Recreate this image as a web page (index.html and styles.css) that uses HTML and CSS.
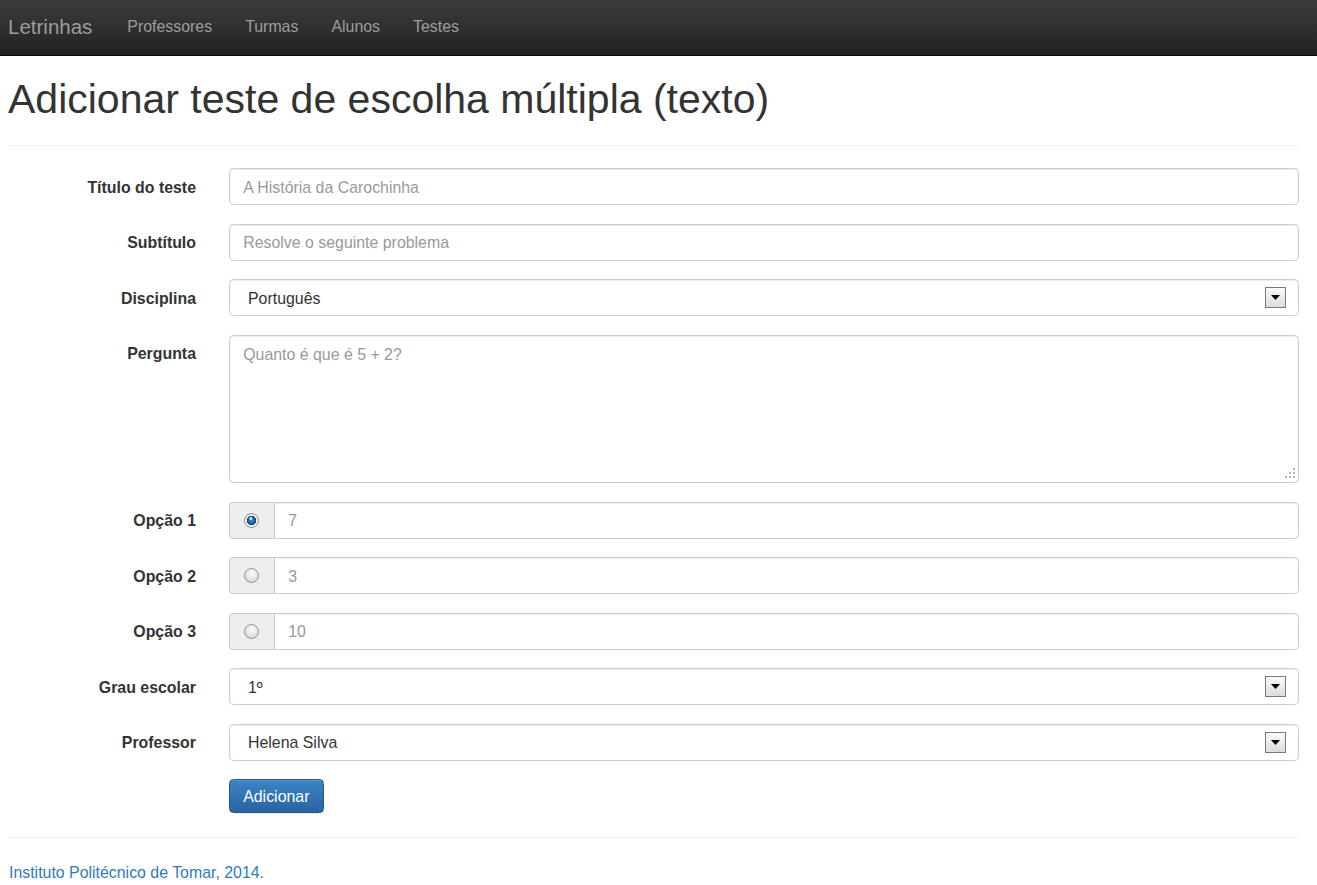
FILE: index.html
```html
<!DOCTYPE html>
<html lang="pt">
<head>
<meta charset="utf-8">
<title>Letrinhas</title>
<link rel="stylesheet" href="styles.css">
</head>
<body>
<nav class="navbar">
  <div class="nav-inner">
    <a class="brand">Letrinhas</a>
    <a class="nav-link">Professores</a>
    <a class="nav-link">Turmas</a>
    <a class="nav-link">Alunos</a>
    <a class="nav-link">Testes</a>
  </div>
</nav>
<main class="page">
  <div class="page-header">
    <h1>Adicionar teste de escolha múltipla (texto)</h1>
  </div>
  <form class="form">
    <label class="label">Título do teste</label>
    <div class="control"><span class="placeholder">A História da Carochinha</span></div>

    <label class="label">Subtítulo</label>
    <div class="control"><span class="placeholder">Resolve o seguinte problema</span></div>

    <label class="label">Disciplina</label>
    <div class="control select"><span class="value">Português</span><span class="arrow"><svg width="9" height="5" viewBox="0 0 9 5"><path d="M0 0h9L4.5 5z" fill="#000"/></svg></span></div>

    <label class="label">Pergunta</label>
    <div class="control textarea"><span class="placeholder">Quanto é que é 5 + 2?</span>
      <svg class="grip" width="12" height="12" viewBox="0 0 12 12"><g fill="#b5b5b5"><rect x="9" y="1" width="2" height="2"/><rect x="5" y="5" width="2" height="2"/><rect x="9" y="5" width="2" height="2"/><rect x="1" y="9" width="2" height="2"/><rect x="5" y="9" width="2" height="2"/><rect x="9" y="9" width="2" height="2"/></g></svg>
    </div>

    <label class="label">Opção 1</label>
    <div class="group">
      <span class="addon"><span class="radio checked"></span></span>
      <div class="control in-group"><span class="placeholder">7</span></div>
    </div>

    <label class="label">Opção 2</label>
    <div class="group">
      <span class="addon"><span class="radio"></span></span>
      <div class="control in-group"><span class="placeholder">3</span></div>
    </div>

    <label class="label">Opção 3</label>
    <div class="group">
      <span class="addon"><span class="radio"></span></span>
      <div class="control in-group"><span class="placeholder">10</span></div>
    </div>

    <label class="label">Grau escolar</label>
    <div class="control select"><span class="value">1º</span><span class="arrow"><svg width="9" height="5" viewBox="0 0 9 5"><path d="M0 0h9L4.5 5z" fill="#000"/></svg></span></div>

    <label class="label">Professor</label>
    <div class="control select"><span class="value">Helena Silva</span><span class="arrow"><svg width="9" height="5" viewBox="0 0 9 5"><path d="M0 0h9L4.5 5z" fill="#000"/></svg></span></div>

    <span class="label empty"></span>
    <div class="actions"><button type="button" class="btn">Adicionar</button></div>
  </form>
  <hr class="rule">
  <footer class="footer"><a class="footer-link">Instituto Politécnico de Tomar, 2014.</a></footer>
</main>
</body>
</html>
```
FILE: styles.css
```css
* { box-sizing: border-box; }
html, body { margin: 0; padding: 0; }
body {
  font-family: "Liberation Sans", Arial, sans-serif;
  font-size: 15.9px;
  line-height: 22px;
  color: #333;
  background: #fff;
}
.navbar {
  height: 56px;
  background: linear-gradient(to bottom, #3c3c3c 0%, #222 100%);
  border-bottom: 1px solid #080808;
}
.nav-inner {
  display: flex;
  align-items: center;
  height: 53px;
  padding-left: 8px;
}
.brand {
  font-size: 20.5px;
  color: #9d9d9d;
  padding-right: 18.5px;
  line-height: 22px;
}
.nav-link {
  color: #9d9d9d;
  padding: 0 16.5px;
  line-height: 22px;
}
.page {
  padding: 0 18px 0 8px;
}
.page-header {
  margin: 21px 0 22px;
  padding-bottom: 24px;
  border-bottom: 1px solid #eee;
}
h1 {
  margin: 0;
  font-size: 41px;
  font-weight: normal;
  line-height: 44px;
  color: #333;
}
.form {
  display: grid;
  grid-template-columns: 188px 1fr;
  column-gap: 33px;
  row-gap: 18.5px;
}
.label {
  text-align: right;
  font-weight: bold;
  padding-top: 8.5px;
}
.control {
  height: 37px;
  border: 1px solid #ccc;
  border-radius: 4.4px;
  box-shadow: inset 0 1px 1px rgba(0,0,0,.075);
  padding: 7.6px 13.2px 5.6px;
  background: #fff;
  display: flex;
  align-items: center;
}
.placeholder { color: #999; }
.select {
  justify-content: space-between;
  padding-left: 18px;
  padding-right: 12px;
}
.value { color: #333; }
.arrow {
  width: 21px;
  height: 21px;
  border: 1px solid #7a7a7a;
  background: linear-gradient(to bottom, #fafafa, #dcdcdc);
  display: flex;
  align-items: center;
  justify-content: center;
  margin-top: -2px;
}
.textarea {
  height: 148.5px;
  flex-direction: column;
  align-items: flex-start;
  padding: 8.6px 13.2px 3px;
}
.grip {
  margin-top: auto;
  align-self: flex-end;
  margin-right: -11px;
}
.group {
  display: flex;
  height: 37px;
}
.addon {
  width: 45px;
  flex: none;
  background: #eee;
  border: 1px solid #ccc;
  border-right: none;
  border-radius: 4.4px 0 0 4.4px;
  display: flex;
  align-items: center;
  justify-content: center;
}
.in-group {
  flex: 1;
  border-radius: 0 4.4px 4.4px 0;
}
.radio {
  width: 15px;
  height: 15px;
  border-radius: 50%;
  border: 1px solid #8f8f8f;
  background: radial-gradient(circle at 50% 35%, #fafafa 0%, #e2e2e2 60%, #c9c9c9 100%);
  margin-left: -1px;
}
.radio.checked {
  background:
    radial-gradient(circle at 45% 35%, #bfe6ff 0 1.2px, transparent 1.8px),
    radial-gradient(circle at 50% 50%, #2f8fd0 0, #1b5f9a 3.6px, #0d3a66 4.4px, #f2f2f2 4.9px, #e0e0e0 100%);
}
.actions { padding: 0; }
.btn {
  font-family: "Liberation Sans", Arial, sans-serif;
  font-size: 15.9px;
  line-height: 22px;
  color: #fff;
  padding: 6px 13.2px 4px;
  border: 1px solid #245580;
  border-radius: 4.4px;
  background: linear-gradient(to bottom, #3a85c6 0%, #2a63a0 100%);
  box-shadow: inset 0 1px 0 rgba(255,255,255,.15), 0 1px 1px rgba(0,0,0,.075);
  height: 34px;
}
.rule {
  margin: 24px 0 0;
  border: 0;
  border-top: 1px solid #eee;
}
.footer {
  padding-top: 24px;
}
.footer-link {
  color: #337ab7;
  padding-left: 1px;
}
```
